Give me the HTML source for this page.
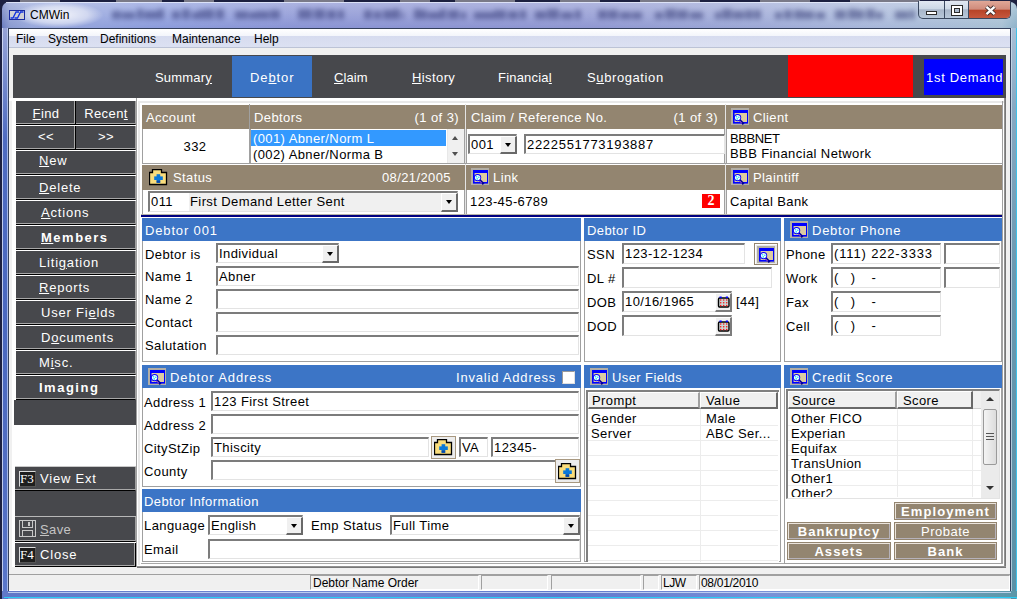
<!DOCTYPE html>
<html><head><meta charset="utf-8">
<style>
*{margin:0;padding:0;box-sizing:border-box}
html,body{width:1017px;height:599px;overflow:hidden;background:#1c2040;font-family:"Liberation Sans",sans-serif}
.a{position:absolute}
.t{position:absolute;white-space:pre;color:#000}
.t u{text-decoration:underline;text-underline-offset:1px}
.inp{position:absolute;background:#fff;border-top:2px solid #7c7c7c;border-left:2px solid #7c7c7c;border-bottom:1px solid #e3e3e3;border-right:1px solid #e3e3e3}
.dd{position:absolute;background:#f0f0f0;border-top:1px solid #fff;border-left:1px solid #fff;border-bottom:2px solid #696969;border-right:2px solid #696969}
.dd:after{content:"";position:absolute;left:4px;top:6px;border-left:3.5px solid transparent;border-right:3.5px solid transparent;border-top:4px solid #000}
.lb{position:absolute;background:#47484c;border-bottom:1px solid #000;border-right:1px solid #a0a0a0;box-shadow:inset 0 -1px 0 #a8a8a8}
.lb2{position:absolute;background:#47484c;border-bottom:1px solid #000;border-right:1px solid #000;box-shadow:inset -1px -1px 0 #a8a8a8}
.tb{position:absolute;background:#938570;border:1px solid #938570;box-shadow:inset 1px 1px 0 #ebe4dc,inset -1px -1px 0 #b6b2ba}
</style></head><body>
<div class="a" style="left:0;top:0;width:1017px;height:599px;background:#1c2040"></div>
<div class="a" style="left:2px;top:2px;width:1015px;height:597px;border-radius:7px 7px 0 0;background:linear-gradient(90deg,#6a7cc0 0px,#8a9ad0 8px,#98a8dc 30px,#8c9cdc 150px,#8a94d4 300px,#8c94d2 450px,#9098d2 600px,#9ca8d6 750px,#a8b8da 880px,#a8c0d4 1000px,#8ab0c8 1017px)"></div>
<div class="a" style="left:2px;top:2px;width:1015px;height:26px;border-radius:7px 7px 0 0;background:linear-gradient(180deg,rgba(255,255,255,0.30),rgba(255,255,255,0.0))"></div>
<div class="a" style="left:0;top:0;width:1017px;height:28px;filter:blur(2.8px);opacity:0.42"><div class="a" style="left:112px;top:11px;width:9px;height:8px;background:#1a2060"></div><div class="a" style="left:122px;top:12px;width:13px;height:7px;background:#1a2060"></div><div class="a" style="left:137px;top:9px;width:6px;height:10px;background:#1a2060"></div><div class="a" style="left:144px;top:11px;width:14px;height:8px;background:#1a2060"></div><div class="a" style="left:158px;top:9px;width:6px;height:10px;background:#1a2060"></div><div class="a" style="left:172px;top:11px;width:8px;height:8px;background:#1a2060"></div><div class="a" style="left:182px;top:9px;width:8px;height:10px;background:#1a2060"></div><div class="a" style="left:192px;top:12px;width:6px;height:7px;background:#1a2060"></div><div class="a" style="left:198px;top:10px;width:6px;height:9px;background:#1a2060"></div><div class="a" style="left:204px;top:9px;width:10px;height:10px;background:#1a2060"></div><div class="a" style="left:216px;top:9px;width:8px;height:10px;background:#1a2060"></div><div class="a" style="left:235px;top:11px;width:13px;height:8px;background:#1a2060"></div><div class="a" style="left:249px;top:12px;width:7px;height:7px;background:#1a2060"></div><div class="a" style="left:256px;top:11px;width:13px;height:8px;background:#1a2060"></div><div class="a" style="left:270px;top:10px;width:10px;height:9px;background:#1a2060"></div><div class="a" style="left:298px;top:9px;width:14px;height:10px;background:#1a2060"></div><div class="a" style="left:314px;top:9px;width:11px;height:10px;background:#1a2060"></div><div class="a" style="left:327px;top:10px;width:9px;height:9px;background:#1a2060"></div><div class="a" style="left:338px;top:10px;width:6px;height:9px;background:#1a2060"></div><div class="a" style="left:364px;top:10px;width:8px;height:9px;background:#1a2060"></div><div class="a" style="left:374px;top:11px;width:7px;height:8px;background:#1a2060"></div><div class="a" style="left:383px;top:10px;width:10px;height:9px;background:#1a2060"></div><div class="a" style="left:393px;top:9px;width:7px;height:10px;background:#1a2060"></div><div class="a" style="left:402px;top:12px;width:2px;height:7px;background:#1a2060"></div><div class="a" style="left:414px;top:9px;width:7px;height:10px;background:#1a2060"></div><div class="a" style="left:421px;top:10px;width:6px;height:9px;background:#1a2060"></div><div class="a" style="left:428px;top:12px;width:12px;height:7px;background:#1a2060"></div><div class="a" style="left:440px;top:9px;width:6px;height:10px;background:#1a2060"></div><div class="a" style="left:448px;top:10px;width:11px;height:9px;background:#1a2060"></div><div class="a" style="left:461px;top:12px;width:5px;height:7px;background:#1a2060"></div><div class="a" style="left:474px;top:12px;width:6px;height:7px;background:#1a2060"></div><div class="a" style="left:480px;top:12px;width:14px;height:7px;background:#1a2060"></div><div class="a" style="left:494px;top:10px;width:12px;height:9px;background:#1a2060"></div><div class="a" style="left:508px;top:11px;width:10px;height:8px;background:#1a2060"></div><div class="a" style="left:520px;top:10px;width:6px;height:9px;background:#1a2060"></div><div class="a" style="left:535px;top:11px;width:11px;height:8px;background:#1a2060"></div><div class="a" style="left:547px;top:9px;width:12px;height:10px;background:#1a2060"></div><div class="a" style="left:561px;top:12px;width:12px;height:7px;background:#1a2060"></div><div class="a" style="left:575px;top:10px;width:6px;height:9px;background:#1a2060"></div><div class="a" style="left:598px;top:10px;width:9px;height:9px;background:#1a2060"></div><div class="a" style="left:608px;top:10px;width:10px;height:9px;background:#1a2060"></div><div class="a" style="left:620px;top:12px;width:11px;height:7px;background:#1a2060"></div><div class="a" style="left:632px;top:12px;width:10px;height:7px;background:#1a2060"></div><div class="a" style="left:655px;top:12px;width:8px;height:7px;background:#1a2060"></div><div class="a" style="left:665px;top:9px;width:11px;height:10px;background:#1a2060"></div><div class="a" style="left:677px;top:10px;width:11px;height:9px;background:#1a2060"></div><div class="a" style="left:690px;top:12px;width:13px;height:7px;background:#1a2060"></div><div class="a" style="left:715px;top:12px;width:6px;height:7px;background:#1a2060"></div><div class="a" style="left:722px;top:9px;width:10px;height:10px;background:#1a2060"></div><div class="a" style="left:733px;top:11px;width:11px;height:8px;background:#1a2060"></div><div class="a" style="left:745px;top:10px;width:8px;height:9px;background:#1a2060"></div><div class="a" style="left:754px;top:10px;width:7px;height:9px;background:#1a2060"></div><div class="a" style="left:775px;top:12px;width:7px;height:7px;background:#1a2060"></div><div class="a" style="left:784px;top:10px;width:8px;height:9px;background:#1a2060"></div><div class="a" style="left:794px;top:10px;width:9px;height:9px;background:#1a2060"></div><div class="a" style="left:803px;top:11px;width:11px;height:8px;background:#1a2060"></div><div class="a" style="left:816px;top:12px;width:9px;height:7px;background:#1a2060"></div><div class="a" style="left:835px;top:10px;width:11px;height:9px;background:#1a2060"></div><div class="a" style="left:848px;top:9px;width:9px;height:10px;background:#1a2060"></div><div class="a" style="left:857px;top:10px;width:7px;height:9px;background:#1a2060"></div><div class="a" style="left:866px;top:9px;width:9px;height:10px;background:#1a2060"></div><div class="a" style="left:876px;top:12px;width:7px;height:7px;background:#1a2060"></div><div class="a" style="left:895px;top:11px;width:14px;height:8px;background:#1a2060"></div><div class="a" style="left:910px;top:10px;width:5px;height:9px;background:#1a2060"></div></div>
<div class="a" style="left:20px;top:0;width:40px;height:2px;background:#7a7a88"></div>
<div class="a" style="left:116px;top:0;width:46px;height:2px;background:#7a7a88"></div>
<div class="a" style="left:184px;top:0;width:30px;height:2px;background:#7a7a88"></div>
<div class="a" style="left:284px;top:0;width:60px;height:2px;background:#7a7a88"></div>
<div class="a" style="left:400px;top:0;width:30px;height:2px;background:#7a7a88"></div>
<div class="a" style="left:455px;top:0;width:60px;height:2px;background:#7a7a88"></div>
<div class="a" style="left:560px;top:0;width:40px;height:2px;background:#7a7a88"></div>
<div class="a" style="left:640px;top:0;width:60px;height:2px;background:#7a7a88"></div>
<div class="a" style="left:760px;top:0;width:50px;height:2px;background:#7a7a88"></div>
<div class="a" style="left:850px;top:0;width:70px;height:2px;background:#7a7a88"></div>
<div class="a" style="left:950px;top:0;width:40px;height:2px;background:#7a7a88"></div>
<div class="a" style="left:6px;top:2px;width:1005px;height:1px;background:rgba(235,240,255,0.75)"></div>
<div class="a" style="left:2px;top:28px;width:6px;height:571px;background:linear-gradient(180deg,#97a3d6 0,#7d90d0 40px,#4f6cc2 110px,#4a68c0 300px,#5470c4 500px,#5a78cc 571px)"></div>
<div class="a" style="left:2px;top:28px;width:1px;height:566px;background:rgba(220,228,248,0.8)"></div>
<div class="a" style="left:7px;top:28px;width:1px;height:566px;background:rgba(200,212,244,0.7)"></div>
<div class="a" style="left:1011px;top:28px;width:6px;height:571px;background:linear-gradient(180deg,#a9bfd6 0,#88a8c2 80px,#6a98b0 250px,#5a90a6 571px)"></div>
<div class="a" style="left:1011px;top:28px;width:1px;height:566px;background:rgba(210,225,240,0.7)"></div>
<div class="a" style="left:1016px;top:28px;width:1px;height:571px;background:#40c0e8"></div>
<div class="a" style="left:2px;top:591px;width:1015px;height:6px;background:linear-gradient(90deg,#6078c8,#6a80d0 20%,#7088d4 35%,#6078cc 55%,#7890d8 75%,#70a0c0 90%,#5a96a8)"></div>
<div class="a" style="left:8px;top:592px;width:1003px;height:1px;background:rgba(210,222,248,0.8)"></div>
<div class="a" style="left:4px;top:597px;width:1013px;height:1px;background:#28ccf4"></div>
<div class="a" style="left:14px;top:2px;width:90px;height:26px;background:radial-gradient(ellipse at center,rgba(255,255,255,0.85) 0,rgba(255,255,255,0.5) 45%,rgba(255,255,255,0) 70%)"></div>
<svg class="a" style="left:9px;top:10px" width="16" height="10"><rect x="0.5" y="0.5" width="15" height="9" fill="#cfcfd4" stroke="#1a2aa0"/><path d="M1.5 8 H4 L7 2 H10 M5.5 8 H8.5 L11.5 2 H14.5" stroke="#1030e0" stroke-width="1.3" fill="none"/></svg>
<div class="t" style="top:8px;font-size:12px;line-height:14px;letter-spacing:0px;color:#000;left:30px;">CMWin</div>
<div class="a" style="left:918px;top:1px;width:93px;height:18px;border:1px solid #3a4860;border-top:none;border-radius:0 0 5px 5px;overflow:hidden;background:linear-gradient(180deg,#e2e8f2 0,#cdd8e6 45%,#a8b6ca 52%,#b8c8da 100%)">
<div class="a" style="left:25px;top:0;width:1px;height:18px;background:#3a4860"></div>
<div class="a" style="left:49px;top:0;width:1px;height:18px;background:#3a4860"></div>
<div class="a" style="left:50px;top:0;width:43px;height:18px;background:linear-gradient(180deg,#e0a898 0,#d08c7c 45%,#b84428 52%,#c85a40 100%)"></div>
<div class="a" style="left:7px;top:10px;width:11px;height:4px;background:#fff;border:1px solid #2a2a2a"></div>
<div class="a" style="left:33px;top:5px;width:10px;height:9px;border:2px solid #fff;box-shadow:0 0 0 1px #2a2a2a, inset 0 0 0 1px #2a2a2a"></div>
<svg class="a" style="left:65px;top:4px" width="13" height="11"><path d="M2.5 1.8 L10.5 9.2 M10.5 1.8 L2.5 9.2" stroke="#3a2a2a" stroke-width="4.2"/><path d="M2.5 1.8 L10.5 9.2 M10.5 1.8 L2.5 9.2" stroke="#fff" stroke-width="2.4"/></svg>
</div>
<div class="a" style="left:8px;top:28px;width:1003px;height:563px;background:#f0f0f0;border:1px solid #34405c"></div>
<div class="a" style="left:9px;top:29px;width:1001px;height:18px;background:linear-gradient(180deg,#ffffff 0,#f3f5fb 38%,#d6dbef 40%,#dce1f2 100%)"></div>
<div class="a" style="left:9px;top:47px;width:1001px;height:1px;background:#bcc3d6"></div>
<div class="t" style="top:32px;font-size:12px;line-height:14px;letter-spacing:0px;color:#000;left:16px;">File</div>
<div class="t" style="top:32px;font-size:12px;line-height:14px;letter-spacing:0px;color:#000;left:48px;">System</div>
<div class="t" style="top:32px;font-size:12px;line-height:14px;letter-spacing:0px;color:#000;left:100px;">Definitions</div>
<div class="t" style="top:32px;font-size:12px;line-height:14px;letter-spacing:0px;color:#000;left:172px;">Maintenance</div>
<div class="t" style="top:32px;font-size:12px;line-height:14px;letter-spacing:0px;color:#000;left:254px;">Help</div>
<div class="a" style="left:13px;top:55px;width:993px;height:43px;background:#47484c"></div>
<div class="a" style="left:232px;top:56px;width:80px;height:41px;background:#3a73c4"></div>
<div class="t" style="top:70px;font-size:13px;line-height:15px;letter-spacing:0.2px;color:#fff;left:155px;">Summar<u>y</u></div>
<div class="t" style="top:70px;font-size:13px;line-height:15px;letter-spacing:0.9px;color:#fff;left:250px;">De<u>b</u>tor</div>
<div class="t" style="top:70px;font-size:13px;line-height:15px;letter-spacing:0.1px;color:#fff;left:334px;"><u>C</u>laim</div>
<div class="t" style="top:70px;font-size:13px;line-height:15px;letter-spacing:0.4px;color:#fff;left:412px;"><u>H</u>istory</div>
<div class="t" style="top:70px;font-size:13px;line-height:15px;letter-spacing:0.2px;color:#fff;left:498px;">Financia<u>l</u></div>
<div class="t" style="top:70px;font-size:13px;line-height:15px;letter-spacing:0.6px;color:#fff;left:587px;">S<u>u</u>brogation</div>
<div class="a" style="left:788px;top:55px;width:125px;height:42px;background:#ff0000"></div>
<div class="a" style="left:924px;top:59px;width:79px;height:36px;background:#0000ff"></div>
<div class="t" style="top:70px;font-size:13px;line-height:15px;letter-spacing:0.7px;color:#fff;left:926px;">1st Demand</div>
<div class="a" style="left:9px;top:98px;width:997px;height:3px;background:#fff"></div>
<div class="a" style="left:12px;top:98px;width:124px;height:469px;background:#fff"></div>
<div class="lb2" style="left:16px;top:101px;width:60px;height:24px"></div>
<div class="t" style="top:106px;font-size:13px;line-height:15px;letter-spacing:0.4px;color:#fff;left:16px;width:60px;text-align:center;"><u>F</u>ind</div>
<div class="lb" style="left:76px;top:101px;width:60px;height:24px"></div>
<div class="t" style="top:106px;font-size:13px;line-height:15px;letter-spacing:0.4px;color:#fff;left:76px;width:60px;text-align:center;">Recen<u>t</u></div>
<div class="lb2" style="left:16px;top:126px;width:60px;height:24px"></div>
<div class="t" style="top:129px;font-size:13px;line-height:15px;letter-spacing:0.4px;color:#fff;left:16px;width:60px;text-align:center;">&lt;&lt;</div>
<div class="lb" style="left:76px;top:126px;width:60px;height:24px"></div>
<div class="t" style="top:129px;font-size:13px;line-height:15px;letter-spacing:0.4px;color:#fff;left:76px;width:60px;text-align:center;">&gt;&gt;</div>
<div class="lb" style="left:16px;top:151px;width:120px;height:24px"></div>
<div class="t" style="top:153px;font-size:13px;line-height:15px;letter-spacing:0.8px;color:#fff;left:39px;"><u>N</u>ew</div>
<div class="lb" style="left:16px;top:176px;width:120px;height:24px"></div>
<div class="t" style="top:180px;font-size:13px;line-height:15px;letter-spacing:0.8px;color:#fff;left:39px;"><u>D</u>elete</div>
<div class="lb" style="left:16px;top:201px;width:120px;height:24px"></div>
<div class="t" style="top:205px;font-size:13px;line-height:15px;letter-spacing:0.8px;color:#fff;left:41px;"><u>A</u>ctions</div>
<div class="lb" style="left:16px;top:226px;width:120px;height:24px"></div>
<div class="t" style="top:230px;font-size:13px;line-height:15px;letter-spacing:1.5px;color:#fff;font-weight:bold;left:41px;"><u>M</u>embers</div>
<div class="lb" style="left:16px;top:251px;width:120px;height:24px"></div>
<div class="t" style="top:255px;font-size:13px;line-height:15px;letter-spacing:0.8px;color:#fff;left:39px;">Liti<u>g</u>ation</div>
<div class="lb" style="left:16px;top:276px;width:120px;height:24px"></div>
<div class="t" style="top:280px;font-size:13px;line-height:15px;letter-spacing:0.8px;color:#fff;left:39px;"><u>R</u>eports</div>
<div class="lb" style="left:16px;top:301px;width:120px;height:24px"></div>
<div class="t" style="top:305px;font-size:13px;line-height:15px;letter-spacing:0.8px;color:#fff;left:41px;">User Fi<u>e</u>lds</div>
<div class="lb" style="left:16px;top:326px;width:120px;height:24px"></div>
<div class="t" style="top:330px;font-size:13px;line-height:15px;letter-spacing:0.8px;color:#fff;left:41px;">D<u>o</u>cuments</div>
<div class="lb" style="left:16px;top:351px;width:120px;height:24px"></div>
<div class="t" style="top:355px;font-size:13px;line-height:15px;letter-spacing:0.8px;color:#fff;left:39px;">M<u>i</u>sc.</div>
<div class="lb" style="left:16px;top:376px;width:120px;height:24px"></div>
<div class="t" style="top:380px;font-size:13px;line-height:15px;letter-spacing:1.5px;color:#fff;font-weight:bold;left:39px;">Imaging</div>
<div class="a" style="left:14px;top:400px;width:122px;height:25px;background:#47484c"></div>
<div class="a" style="left:15px;top:466px;width:121px;height:1px;background:#c8c8c8"></div>
<div class="lb" style="left:15px;top:467px;width:121px;height:24px"></div>
<div class="t" style="top:471px;font-size:13px;line-height:15px;letter-spacing:0.8px;color:#fff;left:40px;">View Ext</div>
<div class="a" style="left:15px;top:491px;width:121px;height:25px;background:#47484c"></div>
<div class="a" style="left:15px;top:516px;width:121px;height:1px;background:#b8b8b8"></div>
<div class="lb" style="left:15px;top:517px;width:121px;height:25px"></div>
<div class="t" style="top:522px;font-size:13px;line-height:15px;letter-spacing:0.4px;color:#c4c4c4;left:40px;"><u>S</u>ave</div>
<div class="lb2" style="left:15px;top:543px;width:121px;height:24px"></div>
<div class="t" style="top:547px;font-size:13px;line-height:15px;letter-spacing:0.8px;color:#fff;left:40px;">Close</div>
<div class="a" style="left:19px;top:471px;width:17px;height:16px;background:#1e1e1e;border:1px solid #dcdcdc;border-right-color:#555;border-bottom-color:#555"></div>
<div class="a" style="left:20px;top:471px;font-family:'Liberation Serif';font-size:13px;line-height:16px;color:#fff">F3</div>
<div class="a" style="left:19px;top:547px;width:17px;height:16px;background:#1e1e1e;border:1px solid #dcdcdc;border-right-color:#555;border-bottom-color:#555"></div>
<div class="a" style="left:20px;top:547px;font-family:'Liberation Serif';font-size:13px;line-height:16px;color:#fff">F4</div>
<svg class="a" style="left:19px;top:520px" width="18" height="18"><rect x="0.5" y="0.5" width="16" height="16" fill="none" stroke="#c8c8c8"/><rect x="3.5" y="0.5" width="10" height="7" fill="none" stroke="#c8c8c8"/><rect x="3.5" y="10.5" width="10" height="6" fill="none" stroke="#c8c8c8"/><rect x="9" y="2" width="2" height="4" fill="#c8c8c8"/></svg>
<div class="a" style="left:136px;top:98px;width:1px;height:469px;background:#a0a0a0"></div>
<div class="a" style="left:137px;top:98px;width:869px;height:469px;background:#fff"></div>
<div class="a" style="left:138px;top:101px;width:866px;height:464px;border:2px solid #e8e8e8;border-right:none;border-bottom:none"></div>
<div class="a" style="left:1002px;top:101px;width:1px;height:463px;background:#a0a0a0"></div>
<div class="a" style="left:1004px;top:98px;width:2px;height:470px;background:linear-gradient(90deg,#a0a0a0,#6a6a6a)"></div>
<div class="a" style="left:137px;top:566px;width:869px;height:2px;background:linear-gradient(180deg,#a0a0a0,#6a6a6a)"></div>
<div class="a" style="left:141px;top:563px;width:862px;height:1px;background:#a8a8a8"></div>
<div class="a" style="left:142px;top:105px;width:107px;height:24px;background:#938570"></div>
<div class="t" style="top:110px;font-size:13px;line-height:15px;letter-spacing:0.4px;color:#fff;left:146px;">Account</div>
<div class="a" style="left:142px;top:129px;width:1px;height:34px;background:#a0a0a0"></div>
<div class="t" style="top:139px;font-size:13px;line-height:15px;letter-spacing:0.4px;color:#000;left:155px;width:80px;text-align:center;">332</div>
<div class="a" style="left:249px;top:104px;width:1px;height:59px;background:#a0a0a0"></div>
<div class="a" style="left:464px;top:129px;width:1px;height:34px;background:#a0a0a0"></div>
<div class="a" style="left:464px;top:190px;width:1px;height:24px;background:#a0a0a0"></div>
<div class="a" style="left:465px;top:104px;width:1px;height:110px;background:#e4e4e4"></div>
<div class="a" style="left:724px;top:129px;width:1px;height:34px;background:#a0a0a0"></div>
<div class="a" style="left:724px;top:190px;width:1px;height:24px;background:#a0a0a0"></div>
<div class="a" style="left:725px;top:104px;width:1px;height:110px;background:#e4e4e4"></div>
<div class="a" style="left:142px;top:163px;width:860px;height:1px;background:#a0a0a0"></div>
<div class="a" style="left:250px;top:105px;width:215px;height:24px;background:#938570"></div>
<div class="t" style="top:110px;font-size:13px;line-height:15px;letter-spacing:0.4px;color:#fff;left:254px;">Debtors</div>
<div class="t" style="top:110px;font-size:13px;line-height:15px;letter-spacing:0.4px;color:#fff;right:558px;">(1 of 3)</div>
<div class="a" style="left:250px;top:129px;width:1px;height:34px;background:#a0a0a0"></div>
<div class="a" style="left:251px;top:130px;width:195px;height:16px;background:#3399ff"></div>
<div class="t" style="top:131px;font-size:13px;line-height:15px;letter-spacing:0.4px;color:#fff;left:253px;">(001) Abner/Norm L</div>
<div class="t" style="top:147px;font-size:13px;line-height:15px;letter-spacing:0.4px;color:#000;left:253px;">(002) Abner/Norma B</div>
<div class="a" style="left:447px;top:129px;width:17px;height:34px;background:#f0f0f0;border-left:1px solid #e8e8e8"></div>
<div class="a" style="left:452px;top:136px;border-left:3.5px solid transparent;border-right:3.5px solid transparent;border-bottom:4px solid #505050"></div>
<div class="a" style="left:452px;top:152px;border-left:3.5px solid transparent;border-right:3.5px solid transparent;border-top:4px solid #505050"></div>
<div class="a" style="left:466px;top:105px;width:259px;height:24px;background:#938570"></div>
<div class="t" style="top:110px;font-size:13px;line-height:15px;letter-spacing:0.4px;color:#fff;left:471px;">Claim / Reference No.</div>
<div class="t" style="top:110px;font-size:13px;line-height:15px;letter-spacing:0.4px;color:#fff;right:299px;">(1 of 3)</div>
<div class="a" style="left:466px;top:129px;width:1px;height:34px;background:#a0a0a0"></div>
<div class="inp" style="left:468px;top:134px;width:49px;height:20px;background:#fff"></div>
<div class="t" style="top:137px;font-size:13px;line-height:15px;letter-spacing:0.4px;color:#000;left:471px;">001</div>
<div class="dd" style="left:500px;top:136px;width:17px;height:18px"></div>
<div class="inp" style="left:524px;top:134px;width:201px;height:20px;background:#fff"></div>
<div class="t" style="top:137px;font-size:13px;line-height:15px;letter-spacing:0.7px;color:#000;left:527px;">2222551773193887</div>
<div class="a" style="left:726px;top:105px;width:276px;height:24px;background:#938570"></div>
<svg class="a" style="left:731px;top:108px" width="19" height="18" viewBox="0 0 19 18">
<rect x="0" y="0" width="18" height="17" fill="#b2aea6"/>
<rect x="2" y="2" width="15" height="13.6" fill="#0000ff"/>
<rect x="3.6" y="5" width="12.4" height="9" fill="#dccba2"/>
<path d="M8.6 12 L12.6 16.2" stroke="#00009a" stroke-width="2.4"/>
<path d="M8.2 12.6 L10.8 15.2" stroke="#e070e0" stroke-width="1"/>
<circle cx="6.6" cy="9.6" r="3.6" fill="#0000ff"/>
<circle cx="6.6" cy="9.6" r="2.7" fill="#f4fbff"/>
<circle cx="5.6" cy="8.8" r="0.8" fill="#20e0f0"/>
<circle cx="7.8" cy="9.2" r="0.8" fill="#20e0f0"/>
<circle cx="6.2" cy="10.9" r="0.8" fill="#20e0f0"/>
</svg>
<div class="t" style="top:110px;font-size:13px;line-height:15px;letter-spacing:0.4px;color:#fff;left:753px;">Client</div>
<div class="a" style="left:726px;top:129px;width:1px;height:34px;background:#a0a0a0"></div>
<div class="t" style="top:131px;font-size:13px;line-height:15px;letter-spacing:-0.4px;color:#000;left:730px;">BBBNET</div>
<div class="t" style="top:146px;font-size:13px;line-height:15px;letter-spacing:0.4px;color:#000;left:730px;">BBB Financial Network</div>
<div class="a" style="left:142px;top:165px;width:323px;height:25px;background:#938570"></div>
<svg class="a" style="left:149px;top:169px" width="19" height="17" viewBox="0 0 19 17">
<path d="M0.5 3.5 H3.5 V0.5 H12.5 V3.5 H17.5 V15.5 H0.5 Z" fill="#fadd7c" stroke="#000" stroke-width="1.3"/>
<rect x="7.6" y="5.2" width="3.6" height="8.6" fill="#0a78d8"/>
<rect x="5.2" y="7.4" width="8.6" height="3.6" fill="#0a78d8"/>
<rect x="7.6" y="11.5" width="3.6" height="2.3" fill="#0848a8"/>
</svg>
<div class="t" style="top:170px;font-size:13px;line-height:15px;letter-spacing:0.4px;color:#fff;left:173px;">Status</div>
<div class="t" style="top:170px;font-size:13px;line-height:15px;letter-spacing:0.4px;color:#fff;right:566px;">08/21/2005</div>
<div class="a" style="left:142px;top:190px;width:1px;height:24px;background:#a0a0a0"></div>
<div class="inp" style="left:148px;top:191px;width:310px;height:21px;background:#f0f0f0"></div>
<div class="a" style="left:150px;top:193px;width:39px;height:18px;background:#fff"></div>
<div class="t" style="top:194px;font-size:13px;line-height:15px;letter-spacing:0.4px;color:#000;left:151px;">011</div>
<div class="t" style="top:194px;font-size:13px;line-height:15px;letter-spacing:0.4px;color:#000;left:190px;">First Demand Letter Sent</div>
<div class="dd" style="left:441px;top:193px;width:17px;height:19px"></div>
<div class="a" style="left:466px;top:165px;width:259px;height:25px;background:#938570"></div>
<svg class="a" style="left:471px;top:168px" width="19" height="18" viewBox="0 0 19 18">
<rect x="0" y="0" width="18" height="17" fill="#b2aea6"/>
<rect x="2" y="2" width="15" height="13.6" fill="#0000ff"/>
<rect x="3.6" y="5" width="12.4" height="9" fill="#dccba2"/>
<path d="M8.6 12 L12.6 16.2" stroke="#00009a" stroke-width="2.4"/>
<path d="M8.2 12.6 L10.8 15.2" stroke="#e070e0" stroke-width="1"/>
<circle cx="6.6" cy="9.6" r="3.6" fill="#0000ff"/>
<circle cx="6.6" cy="9.6" r="2.7" fill="#f4fbff"/>
<circle cx="5.6" cy="8.8" r="0.8" fill="#20e0f0"/>
<circle cx="7.8" cy="9.2" r="0.8" fill="#20e0f0"/>
<circle cx="6.2" cy="10.9" r="0.8" fill="#20e0f0"/>
</svg>
<div class="t" style="top:170px;font-size:13px;line-height:15px;letter-spacing:0.4px;color:#fff;left:493px;">Link</div>
<div class="a" style="left:466px;top:190px;width:1px;height:24px;background:#a0a0a0"></div>
<div class="t" style="top:194px;font-size:13px;line-height:15px;letter-spacing:0.4px;color:#000;left:470px;">123-45-6789</div>
<div class="a" style="left:702px;top:194px;width:18px;height:14px;background:#ff0000"></div>
<div class="t" style="top:193px;font-size:14px;line-height:16px;letter-spacing:0px;color:#fff;font-weight:bold;font-family:'Liberation Serif';left:702px;width:18px;text-align:center;">2</div>
<div class="a" style="left:726px;top:165px;width:276px;height:25px;background:#938570"></div>
<svg class="a" style="left:731px;top:168px" width="19" height="18" viewBox="0 0 19 18">
<rect x="0" y="0" width="18" height="17" fill="#b2aea6"/>
<rect x="2" y="2" width="15" height="13.6" fill="#0000ff"/>
<rect x="3.6" y="5" width="12.4" height="9" fill="#dccba2"/>
<path d="M8.6 12 L12.6 16.2" stroke="#00009a" stroke-width="2.4"/>
<path d="M8.2 12.6 L10.8 15.2" stroke="#e070e0" stroke-width="1"/>
<circle cx="6.6" cy="9.6" r="3.6" fill="#0000ff"/>
<circle cx="6.6" cy="9.6" r="2.7" fill="#f4fbff"/>
<circle cx="5.6" cy="8.8" r="0.8" fill="#20e0f0"/>
<circle cx="7.8" cy="9.2" r="0.8" fill="#20e0f0"/>
<circle cx="6.2" cy="10.9" r="0.8" fill="#20e0f0"/>
</svg>
<div class="t" style="top:170px;font-size:13px;line-height:15px;letter-spacing:0.4px;color:#fff;left:753px;">Plaintiff</div>
<div class="a" style="left:726px;top:190px;width:1px;height:24px;background:#a0a0a0"></div>
<div class="t" style="top:194px;font-size:13px;line-height:15px;letter-spacing:0.4px;color:#000;left:730px;">Capital Bank</div>
<div class="a" style="left:141px;top:214px;width:861px;height:1px;background:#b8b4a8"></div>
<div class="a" style="left:141px;top:215px;width:861px;height:2px;background:#000080"></div>
<div class="a" style="left:142px;top:218px;width:439px;height:23px;background:#3c75c6"></div>
<div class="a" style="left:142px;top:241px;width:439px;height:121px;background:#fff;border:1px solid #a0a0a0;border-top:none"></div>
<div class="t" style="top:223px;font-size:13px;line-height:15px;letter-spacing:0.85px;color:#fff;left:145px;">Debtor 001</div>
<div class="t" style="top:269px;font-size:13px;line-height:15px;letter-spacing:0.4px;color:#000;left:145px;">Name 1</div>
<div class="inp" style="left:216px;top:266px;width:363px;height:20px;background:#fff"></div>
<div class="t" style="top:269px;font-size:13px;line-height:15px;letter-spacing:0.4px;color:#000;left:219px;">Abner</div>
<div class="t" style="top:292px;font-size:13px;line-height:15px;letter-spacing:0.4px;color:#000;left:145px;">Name 2</div>
<div class="inp" style="left:216px;top:289px;width:363px;height:20px;background:#fff"></div>
<div class="t" style="top:292px;font-size:13px;line-height:15px;letter-spacing:0.4px;color:#000;left:219px;"></div>
<div class="t" style="top:315px;font-size:13px;line-height:15px;letter-spacing:0.4px;color:#000;left:145px;">Contact</div>
<div class="inp" style="left:216px;top:312px;width:363px;height:20px;background:#fff"></div>
<div class="t" style="top:315px;font-size:13px;line-height:15px;letter-spacing:0.4px;color:#000;left:219px;"></div>
<div class="t" style="top:338px;font-size:13px;line-height:15px;letter-spacing:0.4px;color:#000;left:145px;">Salutation</div>
<div class="inp" style="left:216px;top:335px;width:363px;height:20px;background:#fff"></div>
<div class="t" style="top:338px;font-size:13px;line-height:15px;letter-spacing:0.4px;color:#000;left:219px;"></div>
<div class="t" style="top:247px;font-size:13px;line-height:15px;letter-spacing:0.4px;color:#000;left:145px;">Debtor is</div>
<div class="inp" style="left:216px;top:243px;width:123px;height:20px;background:#fff"></div>
<div class="t" style="top:246px;font-size:13px;line-height:15px;letter-spacing:0.4px;color:#000;left:219px;">Individual</div>
<div class="dd" style="left:322px;top:245px;width:17px;height:18px"></div>
<div class="a" style="left:584px;top:218px;width:197px;height:23px;background:#3c75c6"></div>
<div class="a" style="left:584px;top:241px;width:197px;height:121px;background:#fff;border:1px solid #a0a0a0;border-top:none"></div>
<div class="t" style="top:223px;font-size:13px;line-height:15px;letter-spacing:0.4px;color:#fff;left:587px;">Debtor ID</div>
<div class="t" style="top:247px;font-size:13px;line-height:15px;letter-spacing:0.4px;color:#000;left:587px;">SSN</div>
<div class="inp" style="left:622px;top:243px;width:123px;height:21px;background:#fff"></div>
<div class="t" style="top:246px;font-size:13px;line-height:15px;letter-spacing:0.4px;color:#000;left:625px;">123-12-1234</div>
<div class="a" style="left:754px;top:243px;width:24px;height:22px;background:#e8e8e8;border:1px solid #938570;box-shadow:inset 1px 1px 0 #fff"></div>
<svg class="a" style="left:757px;top:246px" width="19" height="18" viewBox="0 0 19 18">
<rect x="0" y="0" width="18" height="17" fill="#b2aea6"/>
<rect x="2" y="2" width="15" height="13.6" fill="#0000ff"/>
<rect x="3.6" y="5" width="12.4" height="9" fill="#dccba2"/>
<path d="M8.6 12 L12.6 16.2" stroke="#00009a" stroke-width="2.4"/>
<path d="M8.2 12.6 L10.8 15.2" stroke="#e070e0" stroke-width="1"/>
<circle cx="6.6" cy="9.6" r="3.6" fill="#0000ff"/>
<circle cx="6.6" cy="9.6" r="2.7" fill="#f4fbff"/>
<circle cx="5.6" cy="8.8" r="0.8" fill="#20e0f0"/>
<circle cx="7.8" cy="9.2" r="0.8" fill="#20e0f0"/>
<circle cx="6.2" cy="10.9" r="0.8" fill="#20e0f0"/>
</svg>
<div class="t" style="top:271px;font-size:13px;line-height:15px;letter-spacing:0.4px;color:#000;left:587px;">DL #</div>
<div class="inp" style="left:622px;top:267px;width:150px;height:21px;background:#fff"></div>
<div class="t" style="top:295px;font-size:13px;line-height:15px;letter-spacing:0.4px;color:#000;left:587px;">DOB</div>
<div class="inp" style="left:622px;top:291px;width:110px;height:21px;background:#fff"></div>
<div class="t" style="top:294px;font-size:13px;line-height:15px;letter-spacing:0.4px;color:#000;left:625px;">10/16/1965</div>
<div class="t" style="top:294px;font-size:13px;line-height:15px;letter-spacing:0.4px;color:#000;left:736px;">[44]</div>
<div class="t" style="top:319px;font-size:13px;line-height:15px;letter-spacing:0.4px;color:#000;left:587px;">DOD</div>
<div class="inp" style="left:622px;top:315px;width:110px;height:21px;background:#fff"></div>
<div class="a" style="left:715px;top:293px;width:17px;height:19px;background:#f0f0f0;border-top:1px solid #fff;border-left:1px solid #fff;border-right:2px solid #7c7c7c;border-bottom:2px solid #7c7c7c"></div>
<svg class="a" style="left:717px;top:296px" width="13" height="12"><rect x="1.5" y="2" width="10.5" height="9" rx="1.2" fill="#c8d4d4" stroke="#000" stroke-width="1.4"/><rect x="2.5" y="0.5" width="2.2" height="1.6" fill="#0000ff"/><rect x="8.8" y="0.5" width="2.2" height="1.6" fill="#0000ff"/><g fill="#ff1010"><circle cx="3.7" cy="4.0" r="0.8"/><circle cx="6.7" cy="4.0" r="0.8"/><circle cx="9.7" cy="4.0" r="0.8"/><circle cx="3.7" cy="6.8" r="0.8"/><circle cx="6.7" cy="6.8" r="0.8"/><circle cx="9.7" cy="6.8" r="0.8"/><circle cx="3.7" cy="9.6" r="0.8"/><circle cx="6.7" cy="9.6" r="0.8"/><circle cx="9.7" cy="9.6" r="0.8"/></g></svg>
<div class="a" style="left:715px;top:317px;width:17px;height:19px;background:#f0f0f0;border-top:1px solid #fff;border-left:1px solid #fff;border-right:2px solid #7c7c7c;border-bottom:2px solid #7c7c7c"></div>
<svg class="a" style="left:717px;top:320px" width="13" height="12"><rect x="1.5" y="2" width="10.5" height="9" rx="1.2" fill="#c8d4d4" stroke="#000" stroke-width="1.4"/><rect x="2.5" y="0.5" width="2.2" height="1.6" fill="#0000ff"/><rect x="8.8" y="0.5" width="2.2" height="1.6" fill="#0000ff"/><g fill="#ff1010"><circle cx="3.7" cy="4.0" r="0.8"/><circle cx="6.7" cy="4.0" r="0.8"/><circle cx="9.7" cy="4.0" r="0.8"/><circle cx="3.7" cy="6.8" r="0.8"/><circle cx="6.7" cy="6.8" r="0.8"/><circle cx="9.7" cy="6.8" r="0.8"/><circle cx="3.7" cy="9.6" r="0.8"/><circle cx="6.7" cy="9.6" r="0.8"/><circle cx="9.7" cy="9.6" r="0.8"/></g></svg>
<div class="a" style="left:784px;top:218px;width:218px;height:23px;background:#3c75c6"></div>
<div class="a" style="left:784px;top:241px;width:218px;height:121px;background:#fff;border:1px solid #a0a0a0;border-top:none"></div>
<svg class="a" style="left:790px;top:221px" width="19" height="18" viewBox="0 0 19 18">
<rect x="0" y="0" width="18" height="17" fill="#b2aea6"/>
<rect x="2" y="2" width="15" height="13.6" fill="#0000ff"/>
<rect x="3.6" y="5" width="12.4" height="9" fill="#dccba2"/>
<path d="M8.6 12 L12.6 16.2" stroke="#00009a" stroke-width="2.4"/>
<path d="M8.2 12.6 L10.8 15.2" stroke="#e070e0" stroke-width="1"/>
<circle cx="6.6" cy="9.6" r="3.6" fill="#0000ff"/>
<circle cx="6.6" cy="9.6" r="2.7" fill="#f4fbff"/>
<circle cx="5.6" cy="8.8" r="0.8" fill="#20e0f0"/>
<circle cx="7.8" cy="9.2" r="0.8" fill="#20e0f0"/>
<circle cx="6.2" cy="10.9" r="0.8" fill="#20e0f0"/>
</svg>
<div class="t" style="top:223px;font-size:13px;line-height:15px;letter-spacing:0.75px;color:#fff;left:812px;">Debtor Phone</div>
<div class="t" style="top:247px;font-size:13px;line-height:15px;letter-spacing:0.4px;color:#000;left:786px;">Phone</div>
<div class="inp" style="left:831px;top:243px;width:110px;height:21px;background:#fff"></div>
<div class="t" style="top:246px;font-size:13px;line-height:15px;letter-spacing:0.85px;color:#000;left:834px;">(111) 222-3333</div>
<div class="t" style="top:271px;font-size:13px;line-height:15px;letter-spacing:0.4px;color:#000;left:786px;">Work</div>
<div class="inp" style="left:831px;top:267px;width:110px;height:21px;background:#fff"></div>
<div class="t" style="top:270px;font-size:13px;line-height:15px;letter-spacing:0.4px;color:#000;left:834px;">(   )    -</div>
<div class="t" style="top:295px;font-size:13px;line-height:15px;letter-spacing:0.4px;color:#000;left:786px;">Fax</div>
<div class="inp" style="left:831px;top:291px;width:110px;height:21px;background:#fff"></div>
<div class="t" style="top:294px;font-size:13px;line-height:15px;letter-spacing:0.4px;color:#000;left:834px;">(   )    -</div>
<div class="t" style="top:319px;font-size:13px;line-height:15px;letter-spacing:0.4px;color:#000;left:786px;">Cell</div>
<div class="inp" style="left:831px;top:315px;width:110px;height:21px;background:#fff"></div>
<div class="t" style="top:318px;font-size:13px;line-height:15px;letter-spacing:0.4px;color:#000;left:834px;">(   )    -</div>
<div class="inp" style="left:944px;top:243px;width:56px;height:21px;background:#fff"></div>
<div class="inp" style="left:944px;top:267px;width:56px;height:21px;background:#fff"></div>
<div class="a" style="left:142px;top:365px;width:439px;height:23px;background:#3c75c6"></div>
<div class="a" style="left:142px;top:388px;width:439px;height:99px;background:#fff;border:1px solid #a0a0a0;border-top:none"></div>
<svg class="a" style="left:148px;top:368px" width="19" height="18" viewBox="0 0 19 18">
<rect x="0" y="0" width="18" height="17" fill="#b2aea6"/>
<rect x="2" y="2" width="15" height="13.6" fill="#0000ff"/>
<rect x="3.6" y="5" width="12.4" height="9" fill="#dccba2"/>
<path d="M8.6 12 L12.6 16.2" stroke="#00009a" stroke-width="2.4"/>
<path d="M8.2 12.6 L10.8 15.2" stroke="#e070e0" stroke-width="1"/>
<circle cx="6.6" cy="9.6" r="3.6" fill="#0000ff"/>
<circle cx="6.6" cy="9.6" r="2.7" fill="#f4fbff"/>
<circle cx="5.6" cy="8.8" r="0.8" fill="#20e0f0"/>
<circle cx="7.8" cy="9.2" r="0.8" fill="#20e0f0"/>
<circle cx="6.2" cy="10.9" r="0.8" fill="#20e0f0"/>
</svg>
<div class="t" style="top:370px;font-size:13px;line-height:15px;letter-spacing:0.9px;color:#fff;left:170px;">Debtor Address</div>
<div class="t" style="top:370px;font-size:13px;line-height:15px;letter-spacing:0.8px;color:#fff;left:456px;">Invalid Address</div>
<div class="a" style="left:562px;top:371px;width:13px;height:13px;background:#fff;border:1px solid #9a9a9a;border-right-color:#e0e0e0;border-bottom-color:#e0e0e0"></div>
<div class="t" style="top:395px;font-size:13px;line-height:15px;letter-spacing:0.4px;color:#000;left:144px;">Address 1</div>
<div class="t" style="top:418px;font-size:13px;line-height:15px;letter-spacing:0.4px;color:#000;left:144px;">Address 2</div>
<div class="t" style="top:441px;font-size:13px;line-height:15px;letter-spacing:0.4px;color:#000;left:144px;">CityStZip</div>
<div class="t" style="top:464px;font-size:13px;line-height:15px;letter-spacing:0.4px;color:#000;left:144px;">County</div>
<div class="inp" style="left:211px;top:391px;width:368px;height:20px;background:#fff"></div>
<div class="t" style="top:394px;font-size:13px;line-height:15px;letter-spacing:0.4px;color:#000;left:214px;">123 First Street</div>
<div class="inp" style="left:211px;top:414px;width:368px;height:20px;background:#fff"></div>
<div class="inp" style="left:211px;top:437px;width:218px;height:20px;background:#fff"></div>
<div class="t" style="top:440px;font-size:13px;line-height:15px;letter-spacing:0.4px;color:#000;left:214px;">Thiscity</div>
<div class="a" style="left:431px;top:436px;width:25px;height:23px;background:#ececec;border:1px solid #a89880"></div>
<svg class="a" style="left:434px;top:439px" width="19" height="17" viewBox="0 0 19 17">
<path d="M0.5 3.5 H3.5 V0.5 H12.5 V3.5 H17.5 V15.5 H0.5 Z" fill="#fadd7c" stroke="#000" stroke-width="1.3"/>
<rect x="7.6" y="5.2" width="3.6" height="8.6" fill="#0a78d8"/>
<rect x="5.2" y="7.4" width="8.6" height="3.6" fill="#0a78d8"/>
<rect x="7.6" y="11.5" width="3.6" height="2.3" fill="#0848a8"/>
</svg>
<div class="inp" style="left:459px;top:437px;width:29px;height:20px;background:#fff"></div>
<div class="t" style="top:440px;font-size:13px;line-height:15px;letter-spacing:0.4px;color:#000;left:462px;">VA</div>
<div class="inp" style="left:491px;top:437px;width:88px;height:20px;background:#fff"></div>
<div class="t" style="top:440px;font-size:13px;line-height:15px;letter-spacing:0.4px;color:#000;left:494px;">12345-</div>
<div class="inp" style="left:211px;top:460px;width:368px;height:20px;background:#fff"></div>
<div class="a" style="left:555px;top:459px;width:25px;height:24px;background:#ececec;border:1px solid #a89880"></div>
<svg class="a" style="left:558px;top:463px" width="19" height="17" viewBox="0 0 19 17">
<path d="M0.5 3.5 H3.5 V0.5 H12.5 V3.5 H17.5 V15.5 H0.5 Z" fill="#fadd7c" stroke="#000" stroke-width="1.3"/>
<rect x="7.6" y="5.2" width="3.6" height="8.6" fill="#0a78d8"/>
<rect x="5.2" y="7.4" width="8.6" height="3.6" fill="#0a78d8"/>
<rect x="7.6" y="11.5" width="3.6" height="2.3" fill="#0848a8"/>
</svg>
<div class="a" style="left:142px;top:489px;width:439px;height:23px;background:#3c75c6"></div>
<div class="a" style="left:142px;top:512px;width:439px;height:50px;background:#fff;border:1px solid #a0a0a0;border-top:none"></div>
<div class="t" style="top:494px;font-size:13px;line-height:15px;letter-spacing:0.4px;color:#fff;left:144px;">Debtor Information</div>
<div class="t" style="top:518px;font-size:13px;line-height:15px;letter-spacing:0.4px;color:#000;left:144px;">Language</div>
<div class="inp" style="left:208px;top:515px;width:95px;height:20px;background:#fff"></div>
<div class="t" style="top:518px;font-size:13px;line-height:15px;letter-spacing:0.4px;color:#000;left:211px;">English</div>
<div class="dd" style="left:286px;top:517px;width:17px;height:18px"></div>
<div class="t" style="top:518px;font-size:13px;line-height:15px;letter-spacing:0.4px;color:#000;left:311px;">Emp Status</div>
<div class="inp" style="left:390px;top:515px;width:190px;height:20px;background:#fff"></div>
<div class="t" style="top:518px;font-size:13px;line-height:15px;letter-spacing:0.4px;color:#000;left:393px;">Full Time</div>
<div class="dd" style="left:563px;top:517px;width:17px;height:18px"></div>
<div class="t" style="top:542px;font-size:13px;line-height:15px;letter-spacing:0.4px;color:#000;left:144px;">Email</div>
<div class="inp" style="left:208px;top:539px;width:372px;height:20px;background:#fff"></div>
<div class="a" style="left:584px;top:365px;width:197px;height:23px;background:#3c75c6"></div>
<div class="a" style="left:584px;top:388px;width:197px;height:174px;background:#fff;border:1px solid #a0a0a0;border-top:none"></div>
<svg class="a" style="left:590px;top:368px" width="19" height="18" viewBox="0 0 19 18">
<rect x="0" y="0" width="18" height="17" fill="#b2aea6"/>
<rect x="2" y="2" width="15" height="13.6" fill="#0000ff"/>
<rect x="3.6" y="5" width="12.4" height="9" fill="#dccba2"/>
<path d="M8.6 12 L12.6 16.2" stroke="#00009a" stroke-width="2.4"/>
<path d="M8.2 12.6 L10.8 15.2" stroke="#e070e0" stroke-width="1"/>
<circle cx="6.6" cy="9.6" r="3.6" fill="#0000ff"/>
<circle cx="6.6" cy="9.6" r="2.7" fill="#f4fbff"/>
<circle cx="5.6" cy="8.8" r="0.8" fill="#20e0f0"/>
<circle cx="7.8" cy="9.2" r="0.8" fill="#20e0f0"/>
<circle cx="6.2" cy="10.9" r="0.8" fill="#20e0f0"/>
</svg>
<div class="t" style="top:370px;font-size:13px;line-height:15px;letter-spacing:0.4px;color:#fff;left:612px;">User Fields</div>
<div class="a" style="left:586px;top:390px;width:193px;height:172px;background:#fff;border-top:2px solid #808080;border-left:2px solid #808080"></div>
<div class="a" style="left:588px;top:392px;width:112px;height:17px;background:#f0f0f0;border-bottom:2px solid #696969;border-right:2px solid #a0a0a0;border-top:1px solid #fff;border-left:1px solid #fff"></div>
<div class="a" style="left:700px;top:392px;width:78px;height:17px;background:#f0f0f0;border-bottom:2px solid #696969;border-right:2px solid #696969;border-top:1px solid #fff;border-left:1px solid #fff"></div>
<div class="t" style="top:393px;font-size:13px;line-height:15px;letter-spacing:0.4px;color:#000;left:592px;">Prompt</div>
<div class="t" style="top:393px;font-size:13px;line-height:15px;letter-spacing:0.4px;color:#000;left:706px;">Value</div>
<div class="a" style="left:588px;top:425px;width:190px;height:1px;background:#ececec"></div>
<div class="a" style="left:588px;top:440px;width:190px;height:1px;background:#ececec"></div>
<div class="a" style="left:588px;top:455px;width:190px;height:1px;background:#ececec"></div>
<div class="a" style="left:588px;top:470px;width:190px;height:1px;background:#ececec"></div>
<div class="a" style="left:588px;top:485px;width:190px;height:1px;background:#ececec"></div>
<div class="a" style="left:588px;top:500px;width:190px;height:1px;background:#ececec"></div>
<div class="a" style="left:588px;top:515px;width:190px;height:1px;background:#ececec"></div>
<div class="a" style="left:588px;top:530px;width:190px;height:1px;background:#ececec"></div>
<div class="a" style="left:588px;top:545px;width:190px;height:1px;background:#ececec"></div>
<div class="a" style="left:588px;top:560px;width:190px;height:1px;background:#ececec"></div>
<div class="a" style="left:700px;top:409px;width:1px;height:153px;background:#ececec"></div>
<div class="t" style="top:411px;font-size:13px;line-height:15px;letter-spacing:0.4px;color:#000;left:591px;">Gender</div>
<div class="t" style="top:411px;font-size:13px;line-height:15px;letter-spacing:0.4px;color:#000;left:706px;">Male</div>
<div class="t" style="top:426px;font-size:13px;line-height:15px;letter-spacing:0.4px;color:#000;left:591px;">Server</div>
<div class="t" style="top:426px;font-size:13px;line-height:15px;letter-spacing:0.4px;color:#000;left:706px;">ABC Ser...</div>
<div class="a" style="left:784px;top:365px;width:218px;height:23px;background:#3c75c6"></div>
<div class="a" style="left:784px;top:388px;width:218px;height:176px;background:#fff;border:1px solid #a0a0a0;border-top:none"></div>
<svg class="a" style="left:790px;top:368px" width="19" height="18" viewBox="0 0 19 18">
<rect x="0" y="0" width="18" height="17" fill="#b2aea6"/>
<rect x="2" y="2" width="15" height="13.6" fill="#0000ff"/>
<rect x="3.6" y="5" width="12.4" height="9" fill="#dccba2"/>
<path d="M8.6 12 L12.6 16.2" stroke="#00009a" stroke-width="2.4"/>
<path d="M8.2 12.6 L10.8 15.2" stroke="#e070e0" stroke-width="1"/>
<circle cx="6.6" cy="9.6" r="3.6" fill="#0000ff"/>
<circle cx="6.6" cy="9.6" r="2.7" fill="#f4fbff"/>
<circle cx="5.6" cy="8.8" r="0.8" fill="#20e0f0"/>
<circle cx="7.8" cy="9.2" r="0.8" fill="#20e0f0"/>
<circle cx="6.2" cy="10.9" r="0.8" fill="#20e0f0"/>
</svg>
<div class="t" style="top:370px;font-size:13px;line-height:15px;letter-spacing:0.75px;color:#fff;left:812px;">Credit Score</div>
<div class="a" style="left:786px;top:389px;width:214px;height:110px;background:#fff;border-top:2px solid #808080;border-left:2px solid #808080;border-bottom:1px solid #e3e3e3;border-right:1px solid #e3e3e3"></div>
<div class="a" style="left:788px;top:391px;width:109px;height:18px;background:#f0f0f0;border-bottom:2px solid #696969;border-right:2px solid #a0a0a0;border-top:1px solid #fff;border-left:1px solid #fff"></div>
<div class="a" style="left:897px;top:391px;width:76px;height:18px;background:#f0f0f0;border-bottom:2px solid #696969;border-right:2px solid #696969;border-top:1px solid #fff;border-left:1px solid #fff"></div>
<div class="a" style="left:973px;top:391px;width:8px;height:18px;background:#f0f0f0;border-bottom:1px solid #d0d0d0"></div>
<div class="t" style="top:393px;font-size:13px;line-height:15px;letter-spacing:0.4px;color:#000;left:792px;">Source</div>
<div class="t" style="top:393px;font-size:13px;line-height:15px;letter-spacing:0.4px;color:#000;left:903px;">Score</div>
<div class="a" style="left:788px;top:425px;width:193px;height:1px;background:#ececec"></div>
<div class="a" style="left:788px;top:440px;width:193px;height:1px;background:#ececec"></div>
<div class="a" style="left:788px;top:455px;width:193px;height:1px;background:#ececec"></div>
<div class="a" style="left:788px;top:470px;width:193px;height:1px;background:#ececec"></div>
<div class="a" style="left:788px;top:485px;width:193px;height:1px;background:#ececec"></div>
<div class="a" style="left:897px;top:409px;width:1px;height:88px;background:#ececec"></div>
<div class="a" style="left:972px;top:409px;width:1px;height:88px;background:#ececec"></div>
<div class="t" style="top:411px;font-size:13px;line-height:15px;letter-spacing:0.4px;color:#000;left:791px;">Other FICO</div>
<div class="t" style="top:426px;font-size:13px;line-height:15px;letter-spacing:0.4px;color:#000;left:791px;">Experian</div>
<div class="t" style="top:441px;font-size:13px;line-height:15px;letter-spacing:0.4px;color:#000;left:791px;">Equifax</div>
<div class="t" style="top:456px;font-size:13px;line-height:15px;letter-spacing:0.4px;color:#000;left:791px;">TransUnion</div>
<div class="t" style="top:471px;font-size:13px;line-height:15px;letter-spacing:0.4px;color:#000;left:791px;">Other1</div>
<div class="t" style="top:486px;font-size:13px;line-height:15px;letter-spacing:0.4px;color:#000;left:791px;">Other2</div>
<div class="a" style="left:788px;top:497px;width:193px;height:1px;background:#fff"></div>
<div class="a" style="left:981px;top:391px;width:18px;height:107px;background:#ebebeb"></div>
<div class="a" style="left:983px;top:409px;width:14px;height:56px;background:linear-gradient(90deg,#f4f4f4,#dcdcdc);border:1px solid #9a9a9a;border-radius:2px"></div>
<div class="a" style="left:986px;top:433px;width:8px;height:1px;background:#555"></div>
<div class="a" style="left:986px;top:436px;width:8px;height:1px;background:#555"></div>
<div class="a" style="left:986px;top:439px;width:8px;height:1px;background:#555"></div>
<div class="a" style="left:986px;top:397px;border-left:4px solid transparent;border-right:4px solid transparent;border-bottom:4px solid #333"></div>
<div class="a" style="left:986px;top:486px;border-left:4px solid transparent;border-right:4px solid transparent;border-top:4px solid #333"></div>
<div class="tb" style="left:894px;top:502px;width:103px;height:18px"></div>
<div class="t" style="top:504px;font-size:13px;line-height:15px;letter-spacing:1.1px;color:#fff;font-weight:bold;left:894px;width:103px;text-align:center;">Employment</div>
<div class="tb" style="left:787px;top:522px;width:104px;height:18px"></div>
<div class="t" style="top:524px;font-size:13px;line-height:15px;letter-spacing:1.1px;color:#fff;font-weight:bold;left:787px;width:104px;text-align:center;">Bankruptcy</div>
<div class="tb" style="left:894px;top:522px;width:103px;height:18px"></div>
<div class="t" style="top:524px;font-size:13px;line-height:15px;letter-spacing:0.5px;color:#fff;left:894px;width:103px;text-align:center;">Probate</div>
<div class="tb" style="left:787px;top:542px;width:104px;height:18px"></div>
<div class="t" style="top:544px;font-size:13px;line-height:15px;letter-spacing:1.1px;color:#fff;font-weight:bold;left:787px;width:104px;text-align:center;">Assets</div>
<div class="tb" style="left:894px;top:542px;width:103px;height:18px"></div>
<div class="t" style="top:544px;font-size:13px;line-height:15px;letter-spacing:1.1px;color:#fff;font-weight:bold;left:894px;width:103px;text-align:center;">Bank</div>
<div class="a" style="left:9px;top:574px;width:1001px;height:1px;background:#a0a0a0"></div>
<div class="a" style="left:9px;top:575px;width:1001px;height:15px;background:#f0f0f0"></div>
<div class="a" style="left:9px;top:590px;width:1001px;height:1px;background:#fff"></div>
<div class="a" style="left:310px;top:575px;width:169px;height:15px;border-left:1px solid #a0a0a0;border-top:1px solid #a0a0a0;border-right:1px solid #fff;border-bottom:1px solid #fff"></div>
<div class="a" style="left:481px;top:575px;width:67px;height:15px;border-left:1px solid #a0a0a0;border-top:1px solid #a0a0a0;border-right:1px solid #fff;border-bottom:1px solid #fff"></div>
<div class="a" style="left:551px;top:575px;width:90px;height:15px;border-left:1px solid #a0a0a0;border-top:1px solid #a0a0a0;border-right:1px solid #fff;border-bottom:1px solid #fff"></div>
<div class="a" style="left:643px;top:575px;width:16px;height:15px;border-left:1px solid #a0a0a0;border-top:1px solid #a0a0a0;border-right:1px solid #fff;border-bottom:1px solid #fff"></div>
<div class="a" style="left:661px;top:575px;width:36px;height:15px;border-left:1px solid #a0a0a0;border-top:1px solid #a0a0a0;border-right:1px solid #fff;border-bottom:1px solid #fff"></div>
<div class="a" style="left:699px;top:575px;width:311px;height:15px;border-left:1px solid #a0a0a0;border-top:1px solid #a0a0a0;border-right:1px solid #fff;border-bottom:1px solid #fff"></div>
<div class="t" style="top:576px;font-size:12px;line-height:14px;letter-spacing:0px;color:#000;left:313px;">Debtor Name Order</div>
<div class="t" style="top:576px;font-size:12px;line-height:14px;letter-spacing:-0.5px;color:#000;left:663px;">LJW</div>
<div class="t" style="top:576px;font-size:12px;line-height:14px;letter-spacing:-0.3px;color:#000;left:701px;">08/01/2010</div>
</body></html>
